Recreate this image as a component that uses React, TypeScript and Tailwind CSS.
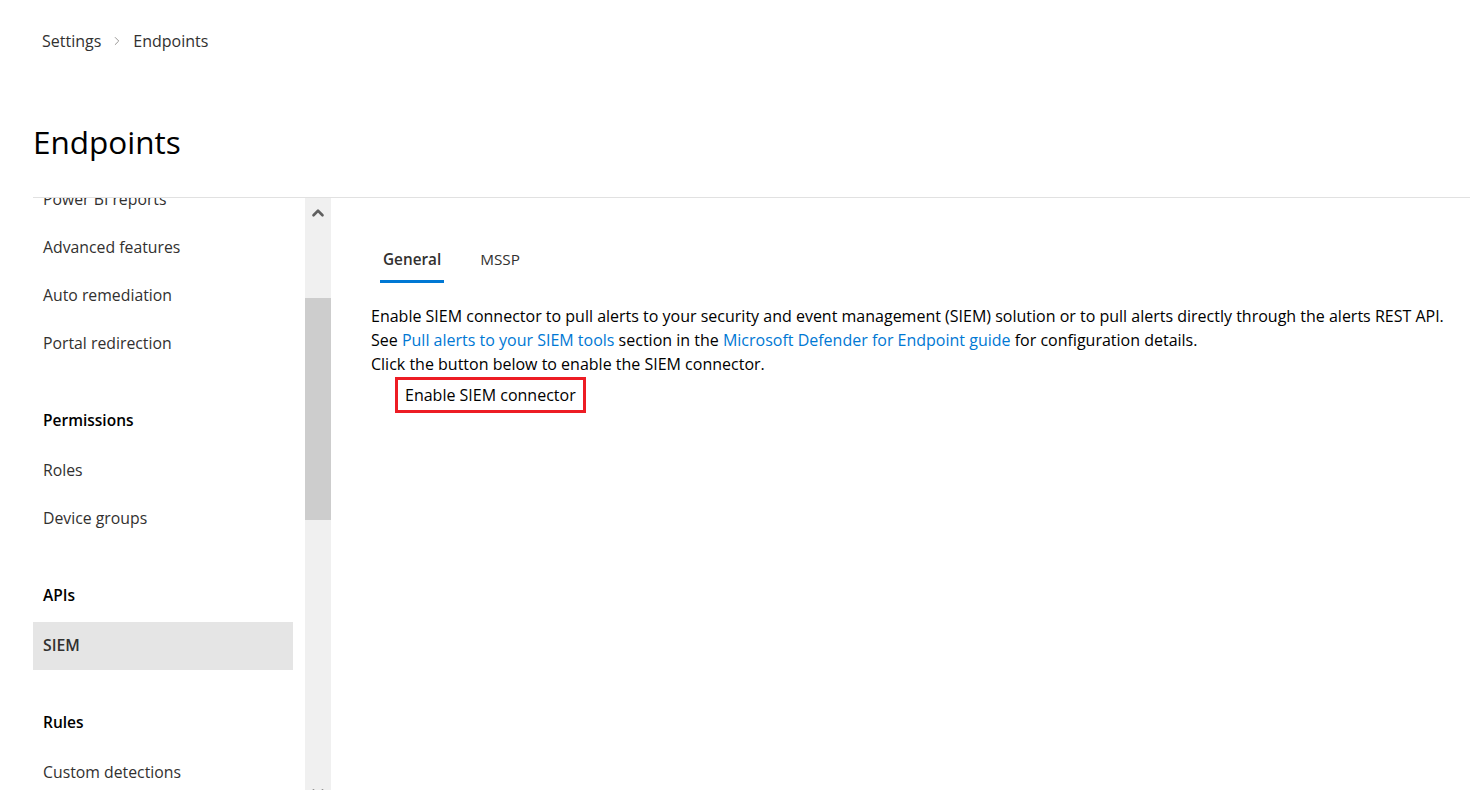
import { ChevronUp, ChevronDown, ChevronRight } from "lucide-react"

// sidebar nav of the settings page, scrolled a bit so the first item is cut off
const groups = [
  { title: "", items: ["Power BI reports", "Advanced features", "Auto remediation", "Portal redirection"] },
  { title: "Permissions", items: ["Roles", "Device groups"] },
  { title: "APIs", items: ["SIEM"] },
  { title: "Rules", items: ["Custom detections"] },
]

const font = { fontFamily: '"Segoe UI", "Open Sans", sans-serif' }

function Sidebar() {
  return (
    <div className="flex h-full">
      <div className="w-[260px] ml-[33px] overflow-hidden">
        <div className="-mt-[22px]">
          {groups.map((g, i) => (
            <div key={i} className={i > 0 ? "mt-[29px]" : ""}>
              {g.title && (
                <div className="h-12 flex items-center px-[10px] text-[15.5px] font-semibold text-black">
                  {g.title}
                </div>
              )}
              <div className={g.title ? "pt-[2px]" : ""}>
                {g.items.map((it) => (
                  <div
                    key={it}
                    className={
                      "h-12 flex items-center px-[10px] text-[15.8px] text-[#323130] " +
                      (it === "SIEM" ? "bg-[#e5e5e5] font-semibold" : "")
                    }
                  >
                    {it}
                  </div>
                ))}
              </div>
            </div>
          ))}
        </div>
      </div>
      {/* scrollbar */}
      <div className="ml-3 w-[26px] bg-[#f0f0f0] flex flex-col relative">
        <div className="h-[24px] flex items-end justify-center">
          <ChevronUp size={18} strokeWidth={3.5} className="text-[#606060]" />
        </div>
        <div className="mt-[76px] h-[222px] bg-[#cdcdcd]" />
        <div className="absolute left-0 right-0 bottom-[-12px] flex justify-center">
          <ChevronDown size={18} strokeWidth={3.5} className="text-[#606060]" />
        </div>
      </div>
    </div>
  )
}

export default function App() {
  return (
    <div className="h-[790px] w-full overflow-hidden bg-white flex flex-col" style={font}>
      <div className="h-[198px] shrink-0 border-b border-[#e1e1e1] ml-[33px]">
        <div className="pt-[29px] pl-[9px] flex items-center text-[16px] text-[#323130]">
          <span>Settings</span>
          <ChevronRight size={14} strokeWidth={1.5} className="mx-[9px] text-[#8a8886]" />
          <span>Endpoints</span>
        </div>
        <h1 className="mt-[69px] text-[31.5px] leading-[40px] text-black">Endpoints</h1>
      </div>
      <div className="flex flex-1 min-h-0">
        <div className="w-[331px] shrink-0">
          <Sidebar />
        </div>
        <div className="flex-1 pl-[40px] pt-[50px] text-[16px] text-black">
          <div className="ml-[9px] flex items-end gap-[36px] text-[15.3px] text-[#323130]">
            <div className="px-[3px] pb-[9px] border-b-[3px] border-[#0078d4] font-semibold">General</div>
            <div className="pb-[12px]">MSSP</div>
          </div>
          <div className="mt-[21px] leading-[24px]">
            <p>
              Enable SIEM connector to pull alerts to your security and event management (SIEM) solution or to pull
              alerts directly through the alerts REST API.
            </p>
            <p>
              See <span className="text-[#0078d4]">Pull alerts to your SIEM tools</span> section in the{" "}
              <span className="text-[#0078d4]">Microsoft Defender for Endpoint guide</span> for configuration details.
            </p>
            <p>Click the button below to enable the SIEM connector.</p>
          </div>
          <div className="ml-[24px] mt-[1px] h-[36px] inline-flex items-center border-[3px] border-[#ed1c24] px-[7px]">
            Enable SIEM connector
          </div>
        </div>
      </div>
    </div>
  )
}
